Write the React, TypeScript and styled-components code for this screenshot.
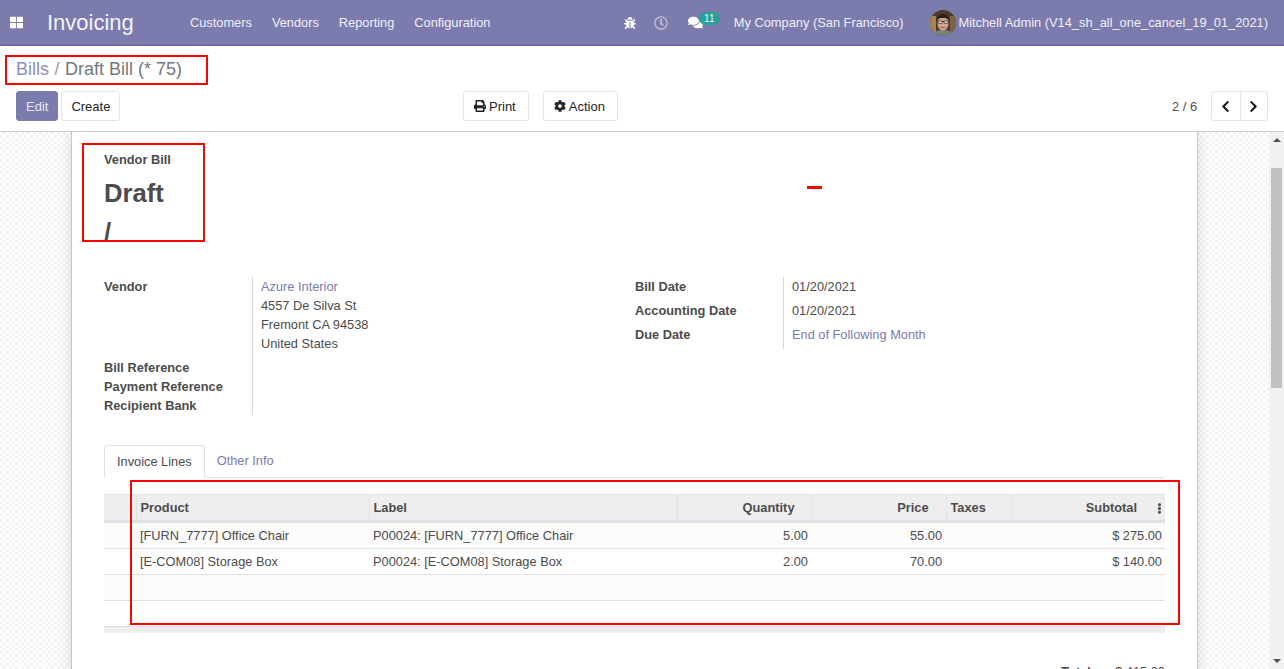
import styled, { createGlobalStyle } from 'styled-components'
import {
  FaBug,
  FaChevronLeft,
  FaChevronRight,
  FaCog,
  FaComments,
  FaEllipsisV,
  FaPrint,
  FaRegClock,
  FaThLarge,
} from 'react-icons/fa'

const GlobalStyle = createGlobalStyle`
  html, body {
    margin: 0;
    height: 100%;
    overflow: hidden;
    background: #ffffff;
    color: #4c4c4c;
    font-family: "Liberation Sans", Arial, sans-serif;
    font-size: 12.8px;
  }
  * {
    box-sizing: border-box;
  }
`

const menus = ['Customers', 'Vendors', 'Reporting', 'Configuration']

const lines = [
  {
    product: '[FURN_7777] Office Chair',
    label: 'P00024: [FURN_7777] Office Chair',
    quantity: '5.00',
    price: '55.00',
    subtotal: '$ 275.00',
  },
  {
    product: '[E-COM08] Storage Box',
    label: 'P00024: [E-COM08] Storage Box',
    quantity: '2.00',
    price: '70.00',
    subtotal: '$ 140.00',
  },
]

const Avatar: React.FC = () => (
  <AvatarSvg viewBox="0 0 26 26">
    <defs>
      <clipPath id="avatar-clip">
        <circle cx="13" cy="13" r="13" />
      </clipPath>
    </defs>
    <g clipPath="url(#avatar-clip)">
      <rect width="26" height="26" fill="#4f3a2a" />
      <rect x="0" y="6" width="6" height="20" fill="#a5854f" />
      <rect x="20" y="6" width="6" height="20" fill="#7d6247" />
      <path d="M3 26c1-5 5-6 10-6s9 1 10 6z" fill="#77817f" />
      <ellipse cx="13" cy="13" rx="5.600" ry="7.400" fill="#d0a58c" />
      <path d="M7 11c0-5 2.500-7 6-7s6 2 6 7c-1-2.500-3-3-6-3s-5 .5-6 3z" fill="#2b201b" />
      <path d="M7.500 11.500h11" stroke="#2b2522" strokeWidth=".8" />
      <rect x="8" y="11" width="4" height="2.400" rx=".8" fill="#ece0d6" stroke="#2b2522" strokeWidth=".7" />
      <rect x="14" y="11" width="4" height="2.400" rx=".8" fill="#ece0d6" stroke="#2b2522" strokeWidth=".7" />
      <path d="M10.500 17c1.700 1 3.300 1 5 0" fill="none" stroke="#7d4f3f" strokeWidth=".9" />
    </g>
  </AvatarSvg>
)

const App: React.FC = () => {
  return (
    <Page>
      <GlobalStyle />
      <Navbar>
        <AppsIcon>
          <FaThLarge />
        </AppsIcon>
        <Brand>Invoicing</Brand>
        <Menu>
          {menus.map((m) => (
            <MenuItem key={m}>{m}</MenuItem>
          ))}
        </Menu>
        <Systray>
          <BugIcon>
            <FaBug />
          </BugIcon>
          <ClockIcon>
            <FaRegClock />
          </ClockIcon>
          <Messages>
            <FaComments />
            <Badge>11</Badge>
          </Messages>
          <Company>My Company (San Francisco)</Company>
          <UserMenu>
            <Avatar />
            Mitchell Admin (V14_sh_all_one_cancel_19_01_2021)
          </UserMenu>
        </Systray>
      </Navbar>

      <ControlPanel>
        <Breadcrumb>
          <Crumb>Bills</Crumb>
          <CrumbSep>/</CrumbSep>
          <span>Draft Bill (* 75)</span>
        </Breadcrumb>
        <ButtonRow>
          <MainButtons>
            <PrimaryButton>Edit</PrimaryButton>
            <Button>Create</Button>
          </MainButtons>
          <SideButtons>
            <IconButton>
              <FaPrint /> Print
            </IconButton>
            <IconButton>
              <FaCog /> Action
            </IconButton>
          </SideButtons>
          <Pager>
            <PagerValue>2 / 6</PagerValue>
            <PagerGroup>
              <PagerButton>
                <FaChevronLeft />
              </PagerButton>
              <PagerButton>
                <FaChevronRight />
              </PagerButton>
            </PagerGroup>
          </Pager>
        </ButtonRow>
      </ControlPanel>

      <Workspace>
        <SheetBackground>
          <Sheet>
            <TitleBlock>
              <TitleLabel>Vendor Bill</TitleLabel>
              <Title>
                Draft
                <br />/
              </Title>
            </TitleBlock>

            <Groups>
              <FieldGroup>
                <Labels>
                  <VendorLabel>Vendor</VendorLabel>
                  <LabelText>Bill Reference</LabelText>
                  <LabelText>Payment Reference</LabelText>
                  <LabelText>Recipient Bank</LabelText>
                </Labels>
                <Values>
                  <ValueLink>Azure Interior</ValueLink>
                  <div>4557 De Silva St</div>
                  <div>Fremont CA 94538</div>
                  <div>United States</div>
                </Values>
              </FieldGroup>
              <FieldGroup>
                <Labels>
                  <DateLabel>Bill Date</DateLabel>
                  <DateLabel>Accounting Date</DateLabel>
                  <DateLabel>Due Date</DateLabel>
                </Labels>
                <Values>
                  <DateValue>01/20/2021</DateValue>
                  <DateValue>01/20/2021</DateValue>
                  <DateLink>End of Following Month</DateLink>
                </Values>
              </FieldGroup>
            </Groups>

            <Tabs>
              <ActiveTab>Invoice Lines</ActiveTab>
              <Tab>Other Info</Tab>
            </Tabs>

            <LinesTable>
              <colgroup>
                <col width="32" />
                <col width="233" />
                <col width="308" />
                <col width="135" />
                <col width="134" />
                <col width="66" />
                <col width="153" />
              </colgroup>
              <thead>
                <tr>
                  <Th />
                  <Th>Product</Th>
                  <Th>Label</Th>
                  <NumTh>Quantity</NumTh>
                  <NumTh>Price</NumTh>
                  <Th>Taxes</Th>
                  <SubtotalTh>
                    Subtotal
                    <Kebab>
                      <FaEllipsisV />
                    </Kebab>
                  </SubtotalTh>
                </tr>
              </thead>
              <tbody>
                {lines.map((l) => (
                  <Row key={l.product}>
                    <Td />
                    <Td>{l.product}</Td>
                    <Td>{l.label}</Td>
                    <NumTd>{l.quantity}</NumTd>
                    <NumTd>{l.price}</NumTd>
                    <Td />
                    <NumTd>{l.subtotal}</NumTd>
                  </Row>
                ))}
                <Row>
                  <Td colSpan={7} />
                </Row>
                <Row>
                  <Td colSpan={7} />
                </Row>
              </tbody>
              <tfoot>
                <tr>
                  <FootCell colSpan={7} />
                </tr>
              </tfoot>
            </LinesTable>

            <Totals>
              <TotalLabel>Total:</TotalLabel>
              <span>$ 415.00</span>
            </Totals>
          </Sheet>
        </SheetBackground>

        <Scrollbar>
          <ArrowUp />
          <Thumb />
          <ArrowDown />
        </Scrollbar>
      </Workspace>

      <BreadcrumbMark />
      <TitleMark />
      <TableMark />
      <Dash />
    </Page>
  )
}

export default App

const Page = styled.div`
  position: relative;
  display: flex;
  flex-direction: column;
  height: 669px;
  overflow: hidden;
`

const Navbar = styled.header`
  display: flex;
  align-items: center;
  flex: none;
  height: 46px;
  padding: 0 16px 0 10px;
  background-color: #7c7bad;
  border-bottom: 1px solid #5f5e97;
  color: #f0eff6;
`

const AppsIcon = styled.span`
  display: flex;
  width: 37px;
  font-size: 13px;
  color: #ffffff;
`

const Brand = styled.span`
  width: 143px;
  font-size: 22px;
  color: #f3f3f8;
`

const Menu = styled.nav`
  display: flex;
  gap: 20px;
`

const MenuItem = styled.span`
  font-size: 12.8px;
`

const Systray = styled.div`
  display: flex;
  align-items: center;
  margin-left: auto;
  font-size: 12.84px;
`

const BugIcon = styled.span`
  display: flex;
  margin-right: 18px;
  font-size: 12px;
  color: #ffffff;
`

const ClockIcon = styled.span`
  display: flex;
  margin-right: 20px;
  font-size: 14px;
  color: #c3c2da;
`

const Messages = styled.span`
  position: relative;
  display: flex;
  width: 46px;
  font-size: 15px;
  color: #ffffff;
`

const Badge = styled.span`
  position: absolute;
  left: 11px;
  top: -3px;
  width: 21px;
  height: 13px;
  border-radius: 7px;
  background-color: #2aa198;
  color: #e8f5f3;
  font-size: 10px;
  line-height: 13px;
  text-align: center;
`

const Company = styled.span`
  margin-right: 27px;
`

const UserMenu = styled.span`
  display: flex;
  align-items: center;
  gap: 2px;
`

const AvatarSvg = styled.svg`
  width: 26px;
  height: 26px;
`

const ControlPanel = styled.section`
  flex: none;
  height: 86px;
  padding: 0 16px;
  background-color: #ffffff;
  border-bottom: 1px solid #cccccc;
`

const Breadcrumb = styled.div`
  display: flex;
  gap: 5.5px;
  height: 45px;
  padding-top: 11px;
  font-size: 18px;
  line-height: 24px;
  color: #777777;
`

const Crumb = styled.span`
  color: #8f8ebd;
`

const CrumbSep = styled.span`
  color: #9a9a9a;
`

const ButtonRow = styled.div`
  display: flex;
  align-items: flex-start;
`

const MainButtons = styled.div`
  display: flex;
  gap: 3px;
  width: 447px;
`

const SideButtons = styled.div`
  display: flex;
  gap: 14px;
`

const Button = styled.button`
  display: flex;
  align-items: center;
  justify-content: center;
  gap: 3px;
  height: 30px;
  padding: 0 9px;
  background-color: #ffffff;
  border: 1px solid #e3e5e8;
  border-radius: 3px;
  color: #212529;
  font-family: inherit;
  font-size: 13px;

  svg {
    font-size: 12px;
  }
`

const PrimaryButton = styled(Button)`
  background-color: #7c7bad;
  border-color: #7c7bad;
  color: #e4e4ef;
`

const IconButton = styled(Button)`
  padding: 0 12px 0 10px;
`

const Pager = styled.div`
  display: flex;
  align-items: center;
  gap: 14px;
  height: 30px;
  margin-left: auto;
`

const PagerValue = styled.span`
  color: #4c4c4c;
`

const PagerGroup = styled.div`
  display: flex;
  border: 1px solid #e3e5e8;
  border-radius: 3px;
`

const PagerButton = styled.span`
  display: flex;
  align-items: center;
  justify-content: center;
  width: 27.5px;
  height: 28px;
  font-size: 13px;
  color: #111111;

  & + & {
    border-left: 1px solid #e3e5e8;
  }
`

const Workspace = styled.main`
  display: flex;
  flex: 1;
  min-height: 0;
`

const SheetBackground = styled.div`
  flex: 1;
  min-width: 0;
  padding: 0 71px;
  overflow: hidden;
  background-color: #ffffff;
  background-image: repeating-conic-gradient(#f4f4f4 0 25%, #ffffff 0 50%);
  background-size: 6px 6px;
`

const Sheet = styled.div`
  width: 1127px;
  padding: 18px 32px 0;
  background-color: #ffffff;
  border-left: 1px solid #c8c8c8;
  border-right: 1px solid #c8c8c8;
  box-shadow: 0 0 12px rgba(0, 0, 0, 0.14);
`

const TitleBlock = styled.div`
  height: 91px;
  overflow: hidden;
`

const TitleLabel = styled.div`
  font-weight: 700;
  line-height: 20px;
`

const Title = styled.div`
  margin-top: 4px;
  font-size: 25.6px;
  font-weight: 700;
  line-height: 39px;
  color: #4c4c4c;
`

const Groups = styled.div`
  display: grid;
  grid-template-columns: 531px 1fr;
  margin-top: 36px;
  align-items: start;
`

const FieldGroup = styled.div`
  display: flex;
`

const Labels = styled.div`
  width: 149px;
  border-right: 1px solid #d9d9d9;
  font-weight: 700;
`

const LabelText = styled.div`
  line-height: 19px;
`

const VendorLabel = styled(LabelText)`
  height: 81px;
`

const DateLabel = styled.div`
  height: 24px;
  line-height: 19px;
`

const Values = styled.div`
  padding-left: 8px;
  line-height: 19px;
`

const ValueLink = styled.div`
  color: #7c7bad;
`

const DateValue = styled.div`
  height: 24px;
  line-height: 19px;
`

const DateLink = styled(DateValue)`
  color: #7c7bad;
`

const Tabs = styled.div`
  display: flex;
  height: 33px;
  margin-top: 30px;
  border-bottom: 1px solid #dee2e6;
`

const Tab = styled.div`
  padding: 0 12px;
  line-height: 32px;
  color: #7c7bad;
`

const ActiveTab = styled(Tab)`
  height: 33px;
  background-color: #ffffff;
  border: 1px solid #dee2e6;
  border-bottom-color: #ffffff;
  border-radius: 3px 3px 0 0;
  color: #4c4c4c;
`

const LinesTable = styled.table`
  width: 1061px;
  margin-top: 16px;
  border-collapse: collapse;
  table-layout: fixed;
`

const Th = styled.th`
  height: 27px;
  padding: 0 4px;
  background-color: #eeeeee;
  border-top: 1px solid #e3e3e3;
  border-bottom: 3px solid #dee2e6;
  border-left: 1px solid #e3e3e3;
  font-weight: 700;
  text-align: left;

  &:first-child {
    border-left: 0;
  }
`

const NumTh = styled(Th)`
  padding-right: 17px;
  text-align: right;
`

const SubtotalTh = styled(NumTh)`
  position: relative;
  padding-right: 28px;
`

const Kebab = styled.span`
  position: absolute;
  right: 0;
  top: 8px;
  font-size: 11px;
`

const Row = styled.tr`
  height: 26px;
  border-bottom: 1px solid #dee2e6;

  &:first-child {
    height: 27px;
  }

  &:nth-child(odd) {
    background-color: #fbfbfb;
  }
`

const Td = styled.td`
  padding: 0 3px 0 4px;
  white-space: nowrap;
`

const NumTd = styled(Td)`
  padding-right: 4px;
  text-align: right;

  &:last-child {
    padding-right: 3px;
  }
`

const FootCell = styled.td`
  height: 6px;
  padding: 0;
  background-color: #eeeeee;
`

const Totals = styled.div`
  display: flex;
  justify-content: flex-end;
  gap: 20px;
  margin-top: 29px;
  line-height: 19px;
`

const TotalLabel = styled.span`
  font-weight: 700;
`

const Scrollbar = styled.aside`
  position: relative;
  flex: none;
  display: flex;
  flex-direction: column;
  align-items: center;
  width: 15px;
  background-color: #f1f1f1;
`

const ArrowUp = styled.span`
  width: 0;
  height: 0;
  margin-top: 6px;
  border-left: 4px solid transparent;
  border-right: 4px solid transparent;
  border-bottom: 4px solid #505050;
`

const Thumb = styled.span`
  width: 11px;
  height: 220px;
  margin-top: 26px;
  background-color: #c1c1c1;
`

const ArrowDown = styled.span`
  width: 0;
  height: 0;
  margin-top: auto;
  margin-bottom: 6px;
  border-left: 4px solid transparent;
  border-right: 4px solid transparent;
  border-top: 4px solid #505050;
`

const Mark = styled.div`
  position: absolute;
  border: 2px solid #ff0000;
  pointer-events: none;
`

const BreadcrumbMark = styled(Mark)`
  left: 5px;
  top: 55px;
  width: 203px;
  height: 30px;
`

const TitleMark = styled(Mark)`
  left: 82px;
  top: 143px;
  width: 123px;
  height: 99px;
`

const TableMark = styled(Mark)`
  left: 130px;
  top: 480px;
  width: 1050px;
  height: 145px;
`

const Dash = styled.div`
  position: absolute;
  left: 807px;
  top: 186px;
  width: 15px;
  height: 3px;
  background-color: #ff0000;
`
